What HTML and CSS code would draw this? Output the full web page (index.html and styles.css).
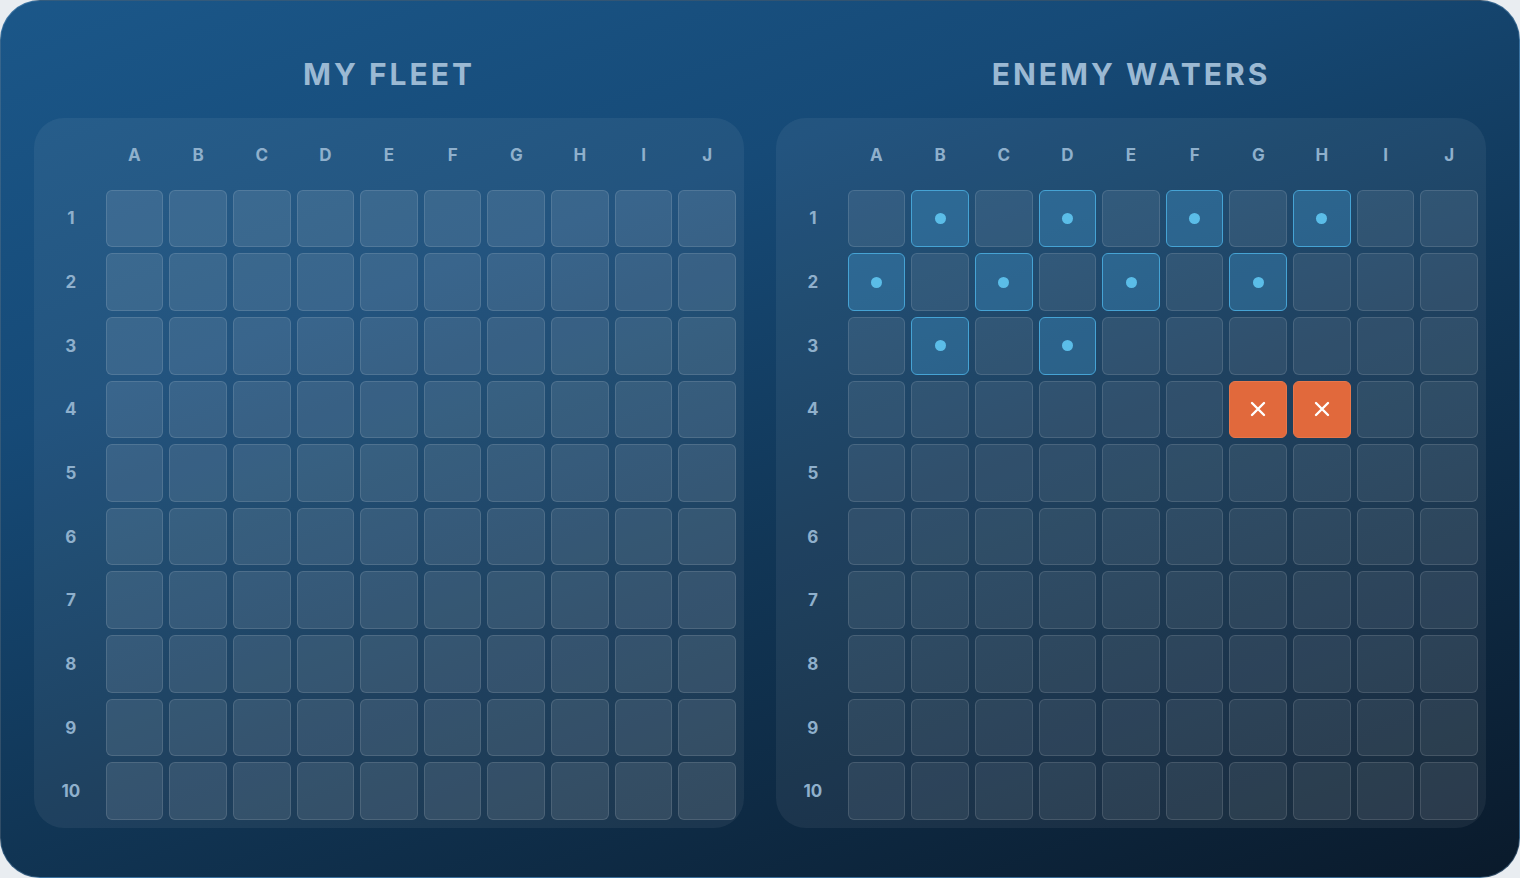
FILE: index.html
```html
<!DOCTYPE html>
<html lang="en">
<head>
  <meta charset="UTF-8" />
  <meta name="viewport" content="width=device-width, initial-scale=1" />
  <title>Battleship</title>
  <link rel="stylesheet" href="styles.css">
</head>
<body>
  <div class="game">
    <!-- Player board -->
    <section class="side">
      <h2 class="side-title">MY FLEET</h2>
      <div class="board" id="myBoard"></div>
    </section>

    <!-- Opponent board -->
    <section class="side">
      <h2 class="side-title">ENEMY WATERS</h2>
      <div class="board enemy" id="enemyBoard"></div>
    </section>
  </div>

  <script>
    const COLS = "ABCDEFGHIJ".split("");

    // shots fired at the enemy: m = miss, h = hit
    const enemyShots = {
      "B1": "m", "D1": "m", "F1": "m", "H1": "m",
      "A2": "m", "C2": "m", "E2": "m", "G2": "m",
      "B3": "m", "D3": "m",
      "G4": "h", "H4": "h"
    };

    const crossSvg =
      '<svg viewBox="0 0 20 20" width="20" height="20">' +
      '<path d="M4 4 L16 16 M16 4 L4 16" stroke="#fff" stroke-width="2.4" stroke-linecap="round" fill="none"/>' +
      '</svg>';

    function buildBoard(el, shots) {
      let html = '<div class="label"></div>';
      COLS.forEach(c => { html += `<div class="label">${c}</div>`; });

      for (let r = 1; r <= 10; r++) {
        html += `<div class="label">${r}</div>`;
        COLS.forEach(c => {
          const shot = shots[c + r];
          if (shot === "m") {
            html += '<div class="cell miss"><span class="dot"></span></div>';
          } else if (shot === "h") {
            html += `<div class="cell hit">${crossSvg}</div>`;
          } else {
            html += '<div class="cell"></div>';
          }
        });
      }
      el.innerHTML = html;
    }

    buildBoard(document.getElementById("myBoard"), {});
    buildBoard(document.getElementById("enemyBoard"), enemyShots);
  </script>
</body>
</html>
```

FILE: styles.css
```css
* {
  box-sizing: border-box;
}

body {
  margin: 0;
  background: #e9edf1;
  font-family: Inter, "Open Sans", "Liberation Sans", sans-serif;
}

.game {
  width: 1520px;
  height: 878px;
  border-radius: 40px;
  border: 1px solid rgba(120, 170, 210, 0.35);
  background: linear-gradient(160deg, #1b5789 0%, #164a77 30%, #113656 58%, #0a1a2b 100%);
  padding: 53px 33px 0;
  display: flex;
  gap: 32px;
  overflow: hidden;
}

.side {
  flex: 1;
  display: flex;
  flex-direction: column;
}

.side-title {
  margin: 0 0 24px;
  height: 40px;
  line-height: 40px;
  text-align: center;
  font-size: 30px;
  font-weight: 700;
  letter-spacing: 3px;
  color: #9bb9d3;
}

.board {
  background: rgba(255, 255, 255, 0.06);
  border-radius: 30px;
  padding: 8px;
  display: grid;
  grid-template-columns: repeat(11, 1fr);
  gap: 6px;
}

.label {
  aspect-ratio: 1;
  display: flex;
  align-items: center;
  justify-content: center;
  font-size: 17px;
  font-weight: 700;
  color: #8fb0cc;
}

.cell {
  aspect-ratio: 1;
  border-radius: 6px;
  background: rgba(255, 255, 255, 0.1);
  border: 1.5px solid rgba(255, 255, 255, 0.12);
  display: flex;
  align-items: center;
  justify-content: center;
}

.enemy .cell {
  background: rgba(255, 255, 255, 0.08);
}

.enemy .cell.miss {
  background: rgba(72, 165, 222, 0.3);
  border-color: #46a3d4;
}

.dot {
  width: 11px;
  height: 11px;
  border-radius: 50%;
  background: #5bbde8;
}

.enemy .cell.hit {
  background: #e1693c;
  border-color: #e8774b;
}
```
